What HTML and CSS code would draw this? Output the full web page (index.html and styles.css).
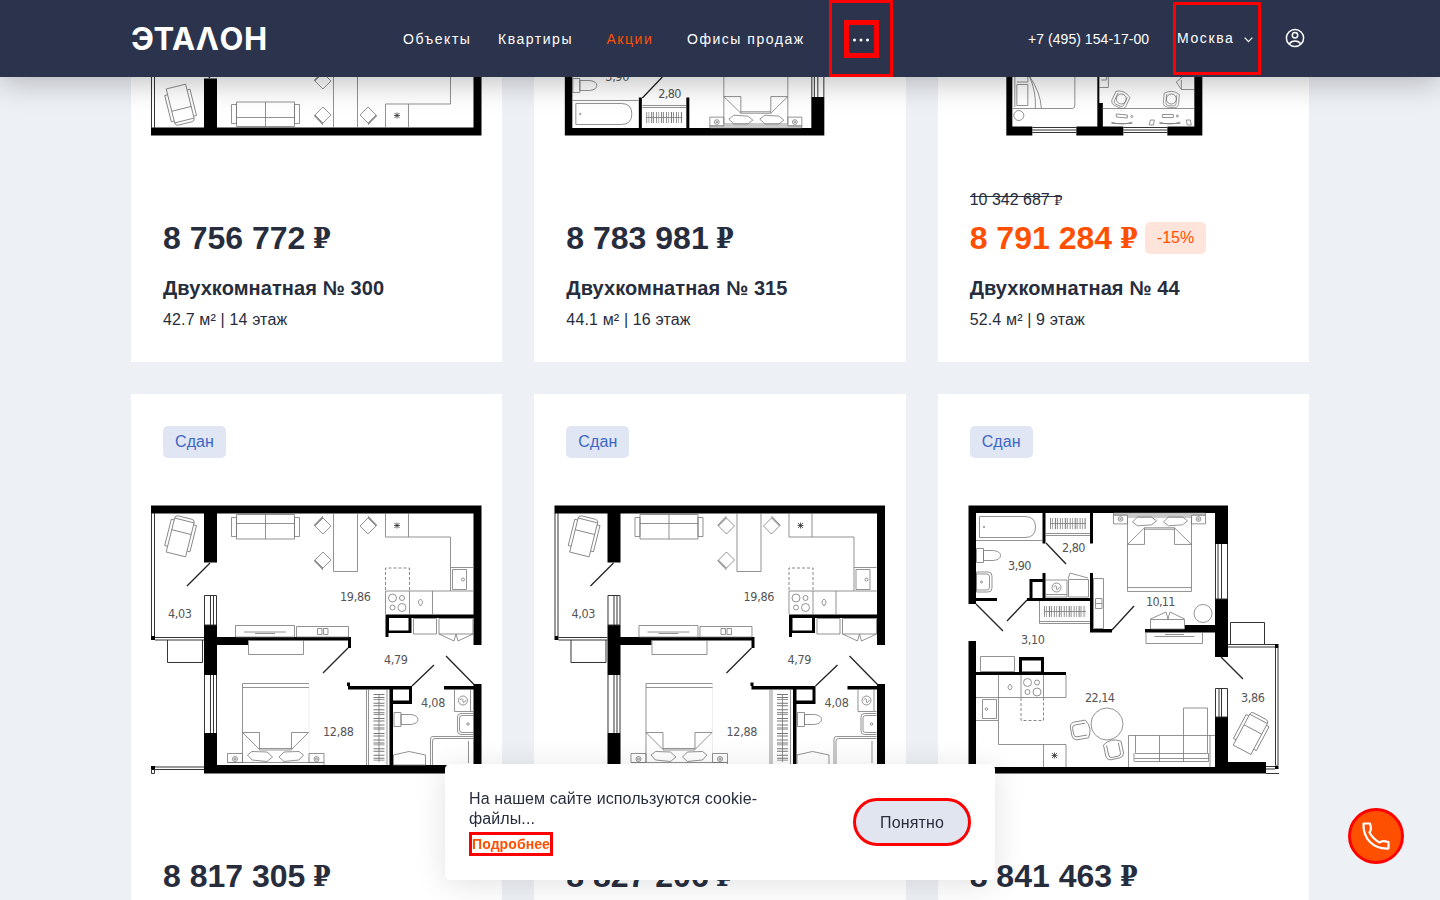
FILE: index.html
```html
<!DOCTYPE html>
<html lang="ru">
<head>
<meta charset="utf-8">
<title>Эталон — квартиры</title>
<link rel="stylesheet" href="styles.css">
</head>
<body>
<svg class="defs" width="0" height="0" aria-hidden="true">
  <defs>
    <g id="chair"><path class="thin" d="M0-8 8 0 0 8-8 0ZM-9 0 0-9M-8.500-1 0-10"/></g>
    <g id="lounge"><path class="thin" d="M-10-16H10V19H-10ZM-10-4H10M-10-16q0-3 3-3H7q3 0 3 3M-10-14h-3V13h3M10-14h3V13h-3"/></g>
    <g id="star"><path class="star" d="M-3 0H3M0-3V3M-2.500-2.500 2.500 2.500M-2.500 2.500 2.500-2.500"/></g>
    <g id="hob"><g class="thin"><circle cx="-5.500" cy="-4.500" r="4"/><circle cx="4" cy="-4.500" r="2.500"/><circle cx="-5.500" cy="5" r="2.500"/><circle cx="4" cy="5" r="4"/></g></g>
    <g id="toilet"><path class="thin" d="M0-7H7V7H0ZM7-5H17Q24-4 24 0T17 5H7Z"/></g>
    <g id="bed">
      <path class="thin" d="M0 0H64V-76H0ZM0-72H64M0-28 17-11V-28H0M64-28 47-11V-28H64M17-11H47M17-12.500H47M5-5 10-9 24-8 29-4 24 0 10 0ZM36-5 41-9 55-8 60-4 55 0 41 0ZM-14-7H0V2H-14ZM64-7H78V2H64ZM-14 2H78V4H-14Z"/>
      <g class="thin"><circle cx="-7" cy="-2" r="2.400"/><circle cx="-7" cy="-2" r=".8"/><circle cx="71" cy="-2" r="2.400"/><circle cx="71" cy="-2" r=".8"/></g>
    </g>
    <g id="seat"><path class="thin" d="M-9-6Q0-12 9-6V6Q8 10 4 10H-4Q-8 10-9 6ZM-6-5V5Q-6 8-3 8H3Q6 8 6 5V-5"/></g>

    <g id="plan-a">
      <path class="wall" d="M151 505.500H481.500V645H473.500V513.500H217V562.500H204V513.500H151ZM204 625H217V637H351V648H348V640.500H248V645H217V675H204ZM204 733H217V765H389.500V704H412V686H347V682.500H350V686H412V704H393V765H473.500V689.500H444V686H473.500V684H481.500V773.500H204ZM385.500 614.500H474V618H411.500V633H388.500V637H385.500Z"/>
      <path class="room" d="M389 618H408.500V630.500H389ZM393 690H409V700.500H393Z"/>
      <path class="wall" d="M348 686H412V689.500H348ZM409 689H412V704H390V700.500H409ZM389.500 689H393V704H389.500ZM151 636H155V640H151ZM151 766H155V770H151Z"/>
      <path class="frame" d="M151.500 513V636M154.500 513V636M155 637.500H204M155 640H204M151.500 769V773.500H154.500V769M155 767H204M155 769.500H204M204.500 595.500H216.500V625H204.500ZM210.500 595V625M213.500 595V625M204.500 675V733M210.500 675V733M213.500 675V733M216.500 675V733M167.500 640V662.500H202.500V640"/>
      <path class="door" d="M210 563 187 586M348 648 323 673M412 686 434 665M446 656 474 684.500"/>
      <use href="#lounge" transform="translate(180.500 536) rotate(14)"/>
      <path class="thin" d="M236.500 514.500H294.500V539H236.500ZM236.500 523.500H294.500M265.500 514V539M231.500 517.500H236.500V536.500H231.500ZM294.500 517.500H299.500V536.500H294.500Z"/>
      <use href="#chair" x="323" y="526"/><use href="#chair" transform="translate(323 560) scale(1 -1)"/><use href="#chair" transform="translate(368 526) scale(-1 1)"/>
      <path class="thin" d="M333.500 513V571.500H357.500V513M385.500 513V537H450.500V591H385.500V614M408.500 513V537M450.500 567.500H473M450.500 591H473M409.500 591V614M432.500 591V614M452.500 569.500H466.500V589.500H452.500ZM420.500 599q4 3 0 7q-4-4 0-7"/>
      <circle class="thin" cx="463" cy="579.500" r="1.500"/>
      <path class="dash" d="M385.500 590V568H409.500V590"/>
      <use href="#star" x="397" y="525.500"/><use href="#hob" x="398" y="602.500"/>
      <path class="thin" d="M235.500 625.500H294.500V637H235.500ZM244 632H286M255 633.500H275M296.500 626.500H348.500V637H296.500ZM317.500 628.500H322V634.500H317.500ZM323.500 628.500H328V634.500H323.500ZM248.500 640V654.500H303.500V640"/>
      <path class="thin" d="M413.500 618.500H436.500V634H413.500ZM439 618.500H473V634H439ZM439 634 454 641 456 634 458 641 473 634"/>
      <path class="faint" d="M309 684V762"/>
      <path class="thin" d="M242.500 762V683.500H309M242.500 687.500H309M242.500 732.500 259.500 749.500V732.500H242.500M308.500 732.500 291.500 749.500V732.500H308.500M259.500 748.500H291.500M259.500 750H291.500M247.500 755 252 751.500 267 752 272.500 757 267 761.500 252 760ZM303.500 755 299 751.500 284 752 279 757 284 761.500 299 760ZM227.500 753.500H242.500V762.500H227.500ZM309 753.500H324V762.500H309ZM227.500 762.500H324V765"/>
      <g class="thin"><circle cx="235" cy="759" r="2.500"/><circle cx="235" cy="759" r="1"/><circle cx="316.500" cy="759" r="2.500"/><circle cx="316.500" cy="759" r="1"/></g>
      <path class="thin" d="M366.500 689V765M368.500 689V765M387 689V765M379 694V762"/>
      <path class="hanger" d="M379 694V762"/>
      <use href="#toilet" transform="translate(394 719.500)"/>
      <path class="thin" d="M454.500 689V711.500H473M470.500 689V711M473 713.500H461Q457.500 713.500 457.500 717V731Q457.500 734.500 461 734.500H473M473 715.500H462Q459.500 715.500 459.500 718V730Q459.500 732.500 462 732.500H473M430.500 765V739Q430.500 736.500 433 736.500H473M432.500 765V741Q432.500 738.500 435 738.500H473M468.500 741V763M393.500 765V755L409 751.500 425.500 755V765Z"/>
      <g class="thin"><circle cx="463" cy="700.500" r="4.500"/><path d="M460 700q3-3 3 1t3-1"/><circle cx="468" cy="724" r="1.200"/></g>
    </g>

    <g id="plan-b">
      <path class="wall" d="M968.500 505.500H1228V544H1215V513H1093V543.500H1090V513H1045.500V543.500H1042.500V513H976V604H968.500ZM968.500 641H976V767H1215V717H1228V762H1266V773.500H968.500ZM1215 599H1228V657H1215V632.500H1145V629H1185V625H1215ZM1042.500 573H1045.500V598H1090V573H1093V629H1112V632.500H1090V601H1027V598H1029.500V579H1042.500ZM976 598H997V601H976ZM976 672H1019V657H1044V672H1066V675H976ZM1275 644H1278.500V648H1275ZM1275 765.500H1278.500V769H1275Z"/>
      <path class="room" d="M1032.500 582H1042.500V598H1032.500ZM1022 660.500H1041V671.500H1022Z"/>
      <path class="frame" d="M1215.500 544V599H1227.500V544M1218 544V599M1221.500 544V599M1215.500 688.500H1227.500V717H1215.500ZM1219 688V717M1221.500 688V717M1230.500 644V622.500H1264.500V644M1228 644.500H1275M1228 647H1275M1275.500 648V765M1278 648V765M1266 766.500H1275M1266 769H1275M1266 773.500H1279"/>
      <path class="door" d="M1046 543 1066 564M976 604 1003 631M1027 600 1007 621M1112 630 1134 606M1221 657 1243 679"/>
      <path class="thin" d="M976 540.500H1042M979.500 516.500H1025Q1035.500 516.500 1035.500 527T1025 537.500H979.500ZM1046 533.500H1090M1046 535.500H1090M976.500 572H988Q992 572 992 576V588Q992 592 988 592H976.500ZM976.500 574H987Q989.500 574 989.500 577V587Q989.500 590 987 590H976.500ZM1046 580H1067V597H1046M1046 594.500H1067M1068 579 1070 573 1088 578M1068.500 579.500H1088.500V597H1068.500ZM1039.500 601V623.500H1090M1039.500 621.500H1090M1093.500 578.500H1103.500V628.500H1093.500ZM1095.500 598.500H1102V608.500H1095.500ZM1095.500 603.500H1102"/>
      <g class="thin"><circle cx="984" cy="527" r=".7"/><circle cx="981.500" cy="582" r="1"/><circle cx="1056.500" cy="587.500" r="4.500"/><path d="M1053.500 587q3-3 3 1t3-1"/><circle cx="1203" cy="613.500" r="9"/></g>
      <use href="#toilet" transform="translate(976.500 555.500)"/>
      <path class="hanger hanger-b" d="M1050 523.500H1086M1044 611.500H1086"/>
      <path class="thin" d="M1050 523.500H1086M1044 611.500H1086"/>
      <use href="#bed" transform="translate(1127.500 517) scale(1 -.98)"/>
      <path class="thin" d="M1150.500 619.500H1184.500V629H1150.500ZM1150.500 619 1166 612 1168 619 1170 612 1184.500 619M1146 632V643.500H1202.500V632M1154.500 636.500H1194.500M1165 634.500H1184"/>
      <path class="thin" d="M980.500 656.500H1014.500V671.500H980.500ZM976 697.500H1066V675M998.500 675V744.500H1066V767M1021 675V697M1043.500 675V697M1043.500 744V767M976 720.500H998M982.500 699.500H996.500V718.500H982.500ZM1010 684q4 4 0 6q-4-2 0-6"/>
      <circle class="thin" cx="986.500" cy="709" r="1.300"/>
      <path class="dash" d="M1021 698V720.500H1043.500V698"/>
      <use href="#hob" x="1033" y="687"/><use href="#star" x="1054.500" y="755.500"/>
      <circle class="thin" cx="1107" cy="724" r="16"/>
      <use href="#seat" transform="translate(1081 730) rotate(80)"/><use href="#seat" transform="translate(1113.500 749) rotate(-12)"/>
      <path class="thin" d="M1128.500 767V735.500H1215M1135.500 735.500V753.500H1207.500V708H1183.500V761.500M1134.500 758.500H1208.500M1134.500 761.500H1208.500M1159.500 735.500V761.500M1134 753V761.500M1208.500 753V761.500M1210 735V767"/>
      <use href="#lounge" transform="translate(1251 733) rotate(28)"/>
    </g>
  </defs>
</svg>

<header class="header">
  <a class="logo" aria-label="ЭТАЛОН">ЭТАΛОН</a>
  <a class="link">Объекты</a>
  <a class="link">Квартиры</a>
  <a class="link link-active">Акции</a>
  <a class="link">Офисы продаж</a>
  <div class="more">
    <span class="more-button"><svg width="18" height="6" viewBox="0 0 18 6"><g fill="#fff"><circle cx="2.500" cy="4" r="1.500"/><circle cx="9" cy="4" r="1.500"/><circle cx="15.500" cy="4" r="1.500"/></g></svg></span>
  </div>
  <a class="phone">+7 (495) 154-17-00</a>
  <div class="city"><span>Москва</span><svg class="chevron" width="9" height="6" viewBox="0 0 9 6"><path d="M.7.700 4.500 4.700 8.300.7" fill="none" stroke="#fff" stroke-width="1.200"/></svg></div>
  <svg class="user" width="20" height="20" viewBox="0 0 20 20" fill="none" stroke="#fff" stroke-width="1.500"><circle cx="10" cy="10" r="8.600"/><circle cx="10" cy="7.300" r="2.700"/><path d="M4.200 16Q6 13 10 13T15.800 16"/></svg>
</header>

<main class="viewport">
<div class="catalog">
  <article class="card">
    <div class="status"></div>
    <svg class="plan" viewBox="131 490 371.330 300"><use href="#plan-a" transform="translate(0 1279) scale(1 -1)"/></svg>
    <div class="old"></div>
    <div class="price">8 756 772 <i class="rub">₽</i></div>
    <h3 class="title">Двухкомнатная № 300</h3>
    <p class="meta">42.7 м² | 14 этаж</p>
  </article>
  <article class="card">
    <div class="status"></div>
    <svg class="plan" viewBox="937.670 490 371.330 300"><use href="#plan-b" transform="translate(0 1279) scale(1 -1)"/><text x="1009" y="719" textLength="24">3,90</text><text x="1062" y="736.500" textLength="23">2,80</text></svg>
    <div class="old"></div>
    <div class="price">8 783 981 <i class="rub">₽</i></div>
    <h3 class="title">Двухкомнатная № 315</h3>
    <p class="meta">44.1 м² | 16 этаж</p>
  </article>
  <article class="card">
    <div class="status"></div>
    <svg class="plan" viewBox="937.670 -148 371.330 300">
      <path class="wall" d="M1006 60H1012V126.500H1032V135.500H1006ZM1076 126.500H1097V60H1099V103H1102.500V126.500H1123V135.500H1076ZM1167 126.500H1194V60H1202V135.500H1167Z"/>
      <path class="frame" d="M1032 127.500H1076M1032 130H1076M1032 132.500H1076M1123 127.500H1167M1123 130H1167M1123 132.500H1167"/>
      <path class="thin" d="M1012 108.500H1072Q1074.500 108.500 1074.500 105V60M1014.500 60V107M1016.500 84.500H1027.500V105.500H1016.500ZM1016.500 82H1027.500V70M1041 108Q1040 92 1029 76M1035 108Q1036 92 1029 76M1102 108.500H1194M1099 87.500H1108V76M1101 80H1106V70M1194 89.500H1181L1176 82 1183 76M1181 80V89M1116 114 1127 115V118L1116 117ZM1111 122Q1121 126 1132 122M1111 123.500H1132M1162 114.500H1173V117.500H1162ZM1159 122Q1169 126 1180 122M1159 123.500H1180M1150 120h4l-1 5h-4ZM1186 120h4l1 5h-4Z"/>
      <g class="thin"><circle cx="1018.500" cy="115.500" r="5"/><circle cx="1131.500" cy="116.500" r="1"/><circle cx="1177" cy="116" r="1"/><circle cx="1121" cy="99" r="5"/><circle cx="1171" cy="99" r="5"/></g>
      <use href="#seat" transform="translate(1120.500 99) rotate(25) scale(.85)"/><use href="#seat" transform="translate(1171 99) rotate(5) scale(.85)"/>
    </svg>
    <div class="old"><span class="struck">10 342 687 <i class="rub">₽</i></span></div>
    <div class="price price-sale">8 791 284 <i class="rub">₽</i><span class="discount">-15%</span></div>
    <h3 class="title">Двухкомнатная № 44</h3>
    <p class="meta">52.4 м² | 9 этаж</p>
  </article>
  <article class="card">
    <div class="status"><span class="badge">Сдан</span></div>
    <svg class="plan" viewBox="131 490 371.330 300"><use href="#plan-a"/><text x="168" y="618.500" textLength="24">4,03</text><text x="340" y="601.500" textLength="31">19,86</text><text x="384" y="664.500" textLength="24">4,79</text><text x="421" y="707.500" textLength="24.500">4,08</text><text x="323" y="736" textLength="31">12,88</text></svg>
    <div class="old"></div>
    <div class="price">8 817 305 <i class="rub">₽</i></div>
  </article>
  <article class="card">
    <div class="status"><span class="badge">Сдан</span></div>
    <svg class="plan" viewBox="130.500 490 371.330 300"><use href="#plan-a"/><text x="168" y="618.500" textLength="24">4,03</text><text x="340" y="601.500" textLength="31">19,86</text><text x="384" y="664.500" textLength="24">4,79</text><text x="421" y="707.500" textLength="24.500">4,08</text><text x="323" y="736" textLength="31">12,88</text></svg>
    <div class="old"></div>
    <div class="price">8 827 206 <i class="rub">₽</i></div>
  </article>
  <article class="card">
    <div class="status"><span class="badge">Сдан</span></div>
    <svg class="plan" viewBox="938 490 371.330 300"><use href="#plan-b"/><text x="1008" y="569.500" textLength="23.500">3,90</text><text x="1062" y="551.500" textLength="23.500">2,80</text><text x="1146" y="605.500" textLength="29.500">10,11</text><text x="1021" y="644" textLength="24">3,10</text><text x="1085" y="702" textLength="30">22,14</text><text x="1241" y="702" textLength="24">3,86</text></svg>
    <div class="old"></div>
    <div class="price">8 841 463 <i class="rub">₽</i></div>
  </article>
</div>
</main>

<aside class="cookie">
  <div class="cookie-text">
    <p>На нашем сайте используются cookie-<br>файлы...</p>
    <a class="details">Подробнее</a>
  </div>
  <button class="accept">Понятно</button>
</aside>

<a class="call"><svg width="30" height="30" viewBox="0 0 30 30"><path d="M2.500 2.500H9Q10.500 8 9.500 9.500L8.500 11.500Q12 18 18.500 21.500L20.500 20.500Q22 19.500 27.500 21V27.500Q16 28 9 21T2.500 2.500Z" fill="none" stroke="#fff" stroke-width="2.200" stroke-linejoin="round"/></svg></a>
</body>
</html>
```
FILE: styles.css
```css
* { box-sizing: border-box; }
html { overflow: hidden; }
body {
  margin: 0;
  height: 900px;
  overflow: hidden;
  background: #edf0f5;
  color: #272d3d;
  font-family: "Liberation Sans", Arial, sans-serif;
}
p, h3 { margin: 0; }
.defs { position: absolute; }

.header {
  position: relative;
  z-index: 2;
  display: grid;
  grid-template-columns: 272px 95px 108.500px 80.500px 142px 64px 135px 145px 88px 24px 20px;
  align-items: center;
  height: 77.400px;
  padding-left: 131px;
  background: #2c344d;
  color: #fff;
  font-size: 14px;
  white-space: nowrap;
  box-shadow: 0 4px 32px rgba(0, 0, 0, .28);
}
.logo {
  font: 700 31px/40px Inter, sans-serif;
  letter-spacing: .6px;
  padding-top: 1px;
}
.link { letter-spacing: 1.530px; }
.link-active { color: #ff4f00; }
.more {
  display: grid;
  justify-content: center;
  align-content: center;
  height: 77px;
  border: 3px solid #f00;
}
.more-button {
  display: grid;
  place-items: center;
  width: 35px;
  height: 38px;
  border: 5px solid #f00;
}
.phone { grid-column: 8; letter-spacing: .05px; }
.city {
  display: flex;
  align-items: center;
  gap: 10px;
  height: 73px;
  padding: 0 0 2px 1px;
  border: 3px solid #f00;
  letter-spacing: 1.600px;
}
.chevron { margin-top: 4px; }
.user { grid-column: 11; margin-top: -2px; }

.viewport { height: 822.600px; overflow: hidden; }
.catalog {
  display: grid;
  grid-template-columns: repeat(3, 1fr);
  gap: 32px;
  width: 1178px;
  margin: -321.800px 0 0 131px;
}
.card {
  height: 606px;
  padding: 32px;
  background: #fff;
}
.status { height: 32px; }
.badge {
  display: inline-block;
  padding: 0 12px;
  border-radius: 5px;
  background: #e1e6f5;
  color: #3c66c4;
  font-size: 16px;
  letter-spacing: .1px;
  line-height: 32px;
}
.plan {
  display: block;
  width: calc(100% + 64px);
  height: 300px;
  margin: 32.500px -32px 35px;
}
.plan text { font: 12.500px "DejaVu Sans Condensed", "DejaVu Sans", sans-serif; fill: #555; }
.wall { fill: #000; }
.room { fill: #fff; }
.frame { fill: none; stroke: #333; stroke-width: 1px; }
.door { fill: none; stroke: #222; stroke-width: 1.300px; }
.thin { fill: none; stroke: #777; stroke-width: .8px; }
.faint { fill: none; stroke: #eee; stroke-width: 1px; }
.star { fill: none; stroke: #333; stroke-width: .8px; }
.dash { fill: none; stroke: #888; stroke-width: 1px; stroke-dasharray: 3 2; }
.hanger { fill: none; stroke: #777; stroke-width: 11px; stroke-dasharray: 1 2 1 1 .7 3 1 1.500 1 3; }
.hanger-b { stroke-dasharray: .8 1.500 .6 2 1 1 .8 2.200; }

.old { height: 24px; padding-top: 1px; font-size: 16px; line-height: 24px; }
.struck {
  display: inline-block;
  height: 24px;
  background: linear-gradient(#272d3d, #272d3d) 0 8px / 100% 1px no-repeat;
}
.rub { font-family: "DejaVu Serif", serif; font-style: normal; font-size: .8em; }
.price {
  display: flex;
  align-items: center;
  gap: 8px;
  height: 40px;
  margin-top: 7px;
  font-size: 32px;
  font-weight: 700;
  white-space: nowrap;
}
.price .rub { margin-left: -.5px; padding-top: 1px; font-size: 27px; transform: scaleX(.94); transform-origin: left; }
.price-sale { color: #ff4f00; }
.discount {
  margin-left: -1.500px;
  padding: 0 12px;
  border-radius: 5px;
  background: #ffe4db;
  font-size: 16px;
  font-weight: 400;
  line-height: 32px;
}
.title { margin-top: 16px; font-size: 20px; letter-spacing: .08px; line-height: 28px; }
.meta { margin-top: 6px; font-size: 16px; letter-spacing: .15px; line-height: 24px; }

.cookie {
  position: fixed;
  left: 445px;
  top: 764px;
  display: flex;
  justify-content: space-between;
  width: 550px;
  height: 116px;
  padding: 24px;
  border-radius: 5px;
  background: #fff;
  box-shadow: 0 4px 32px rgba(0, 0, 0, .12);
  font-size: 16px;
  letter-spacing: .1px;
  line-height: 20px;
  white-space: nowrap;
}
.cookie-text { padding-top: 1px; }
.details {
  display: inline-block;
  height: 24px;
  margin-top: 3px;
  border: 3px solid #f00;
  color: #ff4f00;
  font-size: 14px;
  font-weight: 700;
  line-height: 18px;
}
.accept {
  width: 118px;
  height: 48px;
  margin-top: 10px;
  padding: 2px 0 0;
  border: 3px solid #f00;
  border-radius: 24px;
  background: #e1e5f0;
  color: #272d3d;
  font: 16px "Liberation Sans", Arial, sans-serif;
  letter-spacing: .15px;
}
.call {
  position: fixed;
  left: 1348px;
  top: 808px;
  display: grid;
  place-items: center;
  width: 56px;
  height: 56px;
  border: 3px solid #f00;
  border-radius: 50%;
  background: #ff4f00;
}
```
